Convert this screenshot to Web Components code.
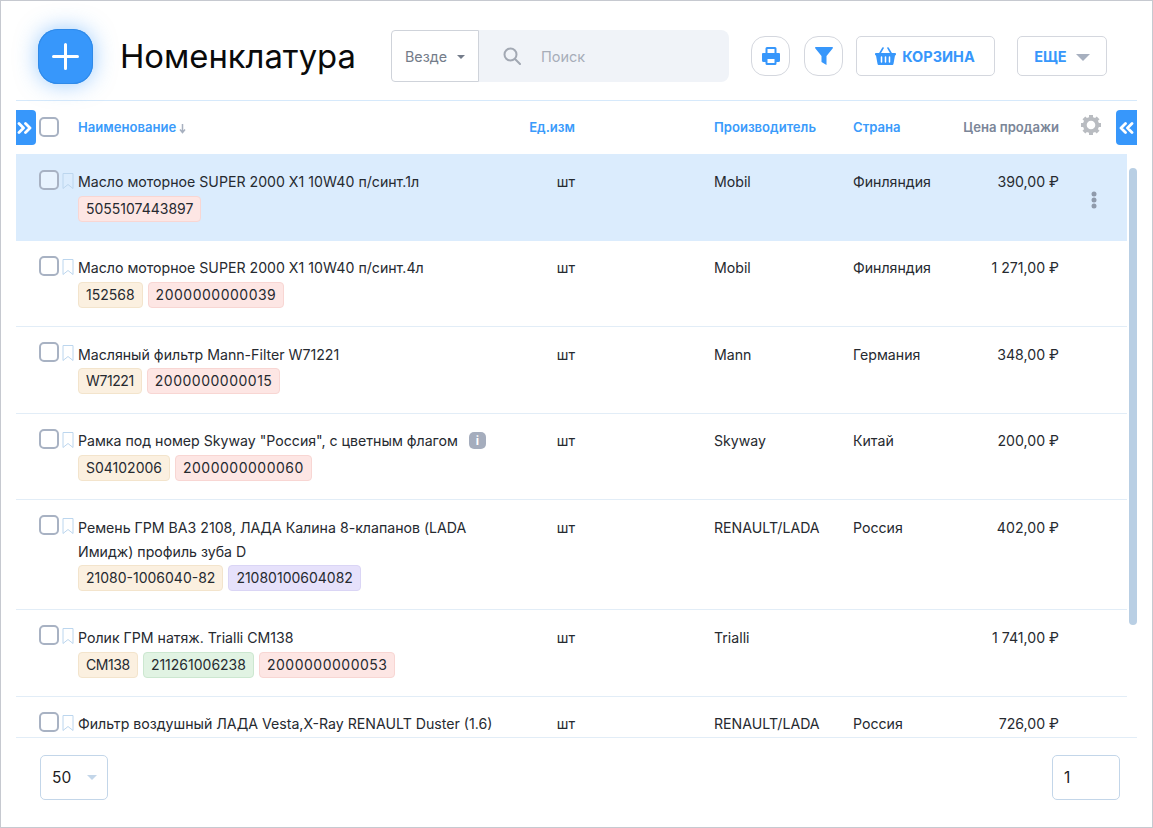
<!DOCTYPE html>
<html lang="ru">
<head>
<meta charset="utf-8">
<title>Номенклатура</title>
<style>
  html, body { margin: 0; height: 100%; }
  body { font-family: Inter, "Noto Sans", sans-serif; color: #262a30; background: #fff; overflow: hidden; }
</style>
</head>
<body>
<nom-app>
  <nom-header slot="header"></nom-header>
  <nom-table-head slot="head"></nom-table-head>

  <nom-row selected name="Масло моторное SUPER 2000 X1 10W40 п/синт.1л" maker="Mobil" country="Финляндия" price="390,00 ₽">
    <nom-tag kind="red">5055107443897</nom-tag>
  </nom-row>
  <nom-row name="Масло моторное SUPER 2000 X1 10W40 п/синт.4л" maker="Mobil" country="Финляндия" price="1 271,00 ₽">
    <nom-tag kind="orange">152568</nom-tag>
    <nom-tag kind="red" wide>2000000000039</nom-tag>
  </nom-row>
  <nom-row name="Масляный фильтр Mann-Filter W71221" maker="Mann" country="Германия" price="348,00 ₽">
    <nom-tag kind="orange" narrow>W71221</nom-tag>
    <nom-tag kind="red" wide>2000000000015</nom-tag>
  </nom-row>
  <nom-row info name="Рамка под номер Skyway &quot;Россия&quot;, с цветным флагом" maker="Skyway" country="Китай" price="200,00 ₽">
    <nom-tag kind="orange">S04102006</nom-tag>
    <nom-tag kind="red" wide>2000000000060</nom-tag>
  </nom-row>
  <nom-row name="Ремень ГРМ ВАЗ 2108, ЛАДА Калина 8-клапанов (LADA Имидж) профиль зуба D" maker="RENAULT/LADA" country="Россия" price="402,00 ₽">
    <nom-tag kind="orange">21080-1006040-82</nom-tag>
    <nom-tag kind="violet">21080100604082</nom-tag>
  </nom-row>
  <nom-row name="Ролик ГРМ натяж. Trialli CM138" maker="Trialli" country="" price="1 741,00 ₽">
    <nom-tag kind="orange" narrow>CM138</nom-tag>
    <nom-tag kind="green">211261006238</nom-tag>
    <nom-tag kind="red" wide>2000000000053</nom-tag>
  </nom-row>
  <nom-row name="Фильтр воздушный ЛАДА Vesta,X-Ray RENAULT Duster (1.6)" maker="RENAULT/LADA" country="Россия" price="726,00 ₽"></nom-row>

  <nom-footer slot="footer"></nom-footer>
</nom-app>

<script>
  const define = (name, html, Base = HTMLElement) => {
    const template = document.createElement('template')
    template.innerHTML = html
    customElements.define(name, class extends Base {
      constructor() {
        super()
        this.attachShadow({ mode: 'open' })
          .appendChild(template.content.cloneNode(true))
      }
    })
  }

  define('nom-app', `
    <style>
      :host { display: flex; flex-direction: column; box-sizing: border-box; height: 828px; padding: 0 15px; border: 1px solid #c6c9d0; position: relative; }
      .list { flex: 1; min-height: 0; overflow: hidden; margin-right: 10px; }
      .thumb { position: absolute; left: 1128px; top: 167px; width: 8px; height: 457px; border-radius: 4px; background: #b9cfe4; }
    </style>
    <slot name="header"></slot>
    <slot name="head"></slot>
    <div class="list"><slot></slot></div>
    <div class="thumb"></div>
    <slot name="footer"></slot>
  `)

  define('nom-header', `
    <style>
      :host { display: flex; align-items: center; height: 100px; box-sizing: border-box; border-bottom: 1px solid #d6e9fb; padding: 11px 0 0 22px; }
      .add { width: 55px; height: 55px; border-radius: 20px; background: #3797fb; box-shadow: 0 0 22px rgba(55, 151, 251, .5), inset 0 0 0 1px #2f8ae8; display: flex; align-items: center; justify-content: center; }
      h1 { margin: 0 36px 0 27px; font-size: 32.800px; font-weight: 400; color: #0a0a0a; white-space: nowrap; width: 235px; }
      .search { display: flex; height: 52px; width: 338px; margin-right: 22px; }
      .where { width: 88px; box-sizing: border-box; border: 1px solid #cfd3da; border-radius: 4px 0 0 4px; display: flex; align-items: center; gap: 10px; padding-left: 13px; font-size: 14.300px; color: #747c8a; }
      .where i { border: 4px solid transparent; border-top-color: #747c8a; border-bottom: 0; margin-top: 2px; }
      .field { flex: 1; background: #f0f3f8; border-radius: 0 8px 8px 0; display: flex; align-items: center; padding-left: 24px; gap: 20px; font-size: 14.500px; color: #a7adb9; }
      .round { width: 39px; height: 40px; box-sizing: border-box; border: 1px solid #d4d7de; border-radius: 14px; display: flex; align-items: center; justify-content: center; margin-right: 14px; }
      .btn { height: 40px; box-sizing: border-box; border: 1px solid #d4d7de; border-radius: 5px; display: flex; align-items: center; justify-content: center; font-size: 14.500px; font-weight: 700; color: #3797fb; }
      .cart { width: 139px; gap: 6px; margin-left: -1px; margin-right: 22px; padding-right: 1px; }
      .more { width: 90px; gap: 9px; }
      .more i { border: 7px solid transparent; border-top-color: #a7b0bf; border-bottom: 0; margin-top: 2px; }
    </style>
    <div class="add">
      <svg width="27" height="27" viewBox="0 0 27 27"><path d="M13.500 1.500v24M1.500 13.500h24" stroke="#fff" stroke-width="3" stroke-linecap="round"/></svg>
    </div>
    <h1>Номенклатура</h1>
    <div class="search">
      <div class="where">Везде<i></i></div>
      <div class="field">
        <svg width="18" height="18" viewBox="0 0 18 18" fill="none" stroke="#a2a8b3" stroke-width="2"><circle cx="7.500" cy="7.500" r="6"/><path d="M12 12l5 5" stroke-linecap="round"/></svg>
        Поиск
      </div>
    </div>
    <div class="round">
      <svg width="18" height="18" viewBox="0 0 18 18"><path fill="#3797fb" d="M3.500 1.500A1.500 1.500 0 0 1 5 0h8a1.500 1.500 0 0 1 1.500 1.500V6H17a1 1 0 0 1 1 1v6.500a1.500 1.500 0 0 1-1.500 1.500h-2v1.500A1.500 1.500 0 0 1 13 18H5a1.500 1.500 0 0 1-1.500-1.500V15h-2A1.500 1.500 0 0 1 0 13.500V7a1 1 0 0 1 1-1h2.500z"/><path fill="#fff" d="M5.500 2h7v4h-7zM5.500 12h7v4h-7z"/></svg>
    </div>
    <div class="round">
      <svg width="18" height="20" viewBox="0 0 18 20"><path fill="#3797fb" d="M.8 1h16.400c.7 0 1 .8.6 1.300L11.500 10v9l-5-3v-6L.2 2.300C-.2 1.800.1 1 .8 1z"/></svg>
    </div>
    <div class="btn cart">
      <svg width="21" height="18" viewBox="0 0 21 18"><path fill="none" stroke="#3797fb" stroke-width="1.600" stroke-linecap="round" d="M4.500 7L8 1M16.500 7L13 1"/><path fill="#3797fb" d="M.8 6h19.400c.4 0 .8.400.8.800v.8c0 .4-.4.800-.8.800H20l-1.500 8.300c-.1.700-.7 1.300-1.400 1.300H3.900c-.7 0-1.300-.6-1.400-1.300L1 8.400H.8c-.4 0-.8-.4-.8-.8v-.8C0 6.400.4 6 .8 6z"/><path stroke="#fff" stroke-width="1.500" stroke-linecap="round" d="M6.500 10v5M10.500 10v5M14.500 10v5"/></svg>
      КОРЗИНА
    </div>
    <div class="btn more">ЕЩЕ<i></i></div>
  `)

  const columns = '62px 422px 75px 278px 100px 106px 68px'

  define('nom-table-head', `
    <style>
      :host { display: grid; grid-template-columns: ${columns}; align-items: center; height: 53px; box-sizing: border-box; padding-bottom: 1px; font-size: 13.100px; font-weight: 600; color: #3a9bfb; position: relative; }
      .box { width: 20px; height: 20px; box-sizing: border-box; margin-left: 23px; border: 2px solid #a8b2c3; border-radius: 5px; }
      .unit { text-align: right; }
      .maker { padding-left: 139px; }
      .price { text-align: right; color: #7b8698; white-space: nowrap; }
      .sort { display: inline-block; vertical-align: -2px; margin-left: 3px; }
      .gear { padding-left: 22px; display: flex; margin-top: -4px; }
      .tab { position: absolute; top: 9px; width: 21px; height: 35px; background: #3797fb; display: flex; align-items: center; justify-content: center; }
      .tab.left { left: 0; width: 20px; border-radius: 0 4px 4px 0; padding-right: 3px; box-sizing: border-box; }
      .tab.right { right: 0; border-radius: 4px 0 0 4px; }
    </style>
    <div class="box"></div>
    <div>Наименование<svg class="sort" width="7" height="11" viewBox="0 0 7 11"><path d="M3.500 1v8M1 6.500l2.500 3 2.500-3" fill="none" stroke="#a7b0bf" stroke-width="1.500"/></svg></div>
    <div class="unit">Ед.изм</div>
    <div class="maker">Производитель</div>
    <div>Страна</div>
    <div class="price">Цена продажи</div>
    <div class="gear">
      <svg width="20" height="20" viewBox="-10 -10 20 20" fill="#b9bcc1">
        <circle r="6.200" fill="none" stroke="#b9bcc1" stroke-width="3.800"/>
        <g><rect x="-2" y="-10" width="4" height="4"/><rect x="-2" y="6" width="4" height="4"/></g>
        <g transform="rotate(45)"><rect x="-2" y="-10" width="4" height="4"/><rect x="-2" y="6" width="4" height="4"/></g>
        <g transform="rotate(90)"><rect x="-2" y="-10" width="4" height="4"/><rect x="-2" y="6" width="4" height="4"/></g>
        <g transform="rotate(135)"><rect x="-2" y="-10" width="4" height="4"/><rect x="-2" y="6" width="4" height="4"/></g>
      </svg>
    </div>
    <div class="tab left"><svg width="15" height="12" viewBox="0 0 15 12" fill="none" stroke="#fff" stroke-width="2.800" stroke-linecap="round" stroke-linejoin="round"><path d="M2 1.500L6.500 6 2 10.500M8.500 1.500L13 6 8.500 10.500"/></svg></div>
    <div class="tab right"><svg width="15" height="12" viewBox="0 0 15 12" fill="none" stroke="#fff" stroke-width="2.800" stroke-linecap="round" stroke-linejoin="round"><path d="M6.500 1.500L2 6 6.500 10.500M13 1.500L8.500 6 13 10.500"/></svg></div>
  `)

  const rowTemplate = document.createElement('template')
  rowTemplate.innerHTML = `
    <style>
      :host { display: grid; grid-template-columns: ${columns}; box-sizing: border-box; padding: 15.500px 0 18.200px; border-bottom: 1px solid #e2edf7; font-size: 14.150px; line-height: 24px; position: relative; }
      :host([selected]) { background: #dbecfd; border-bottom-color: #dbecfd; padding-top: 16px; }
      .lead { display: flex; margin-top: -.5px; padding-left: 23px; gap: 3px; align-items: flex-start; }
      .box { width: 20px; height: 20px; box-sizing: border-box; border: 2px solid #a8b2c3; border-radius: 5px; background: #fff; }
      :host([selected]) .box { background: #e8f3fe; }
      .mark { margin-top: 3px; }
      .tags { display: flex; gap: 5px; margin-top: 1.700px; }
      .unit { text-align: right; }
      .maker { padding-left: 139px; }
      .price { text-align: right; white-space: nowrap; }
      .info { display: none; width: 17px; height: 17px; border-radius: 5px; background: #a5adbd; color: #fff; font-size: 12px; font-weight: 700; line-height: 17px; text-align: center; margin-left: 11px; vertical-align: 1px; }
      :host([info]) .info { display: inline-block; }
      .dots { display: none; padding: 21px 0 0 32px; }
      :host([selected]) .dots { display: block; }
    </style>
    <div class="lead">
      <div class="box"></div>
      <svg class="mark" width="12" height="17" viewBox="0 0 12 17" fill="none" stroke="#bcd6ee"><path d="M1 .500h10v15l-5-4-5 4z"/></svg>
    </div>
    <div>
      <span class="name"></span><span class="info">i</span>
      <div class="tags"><slot></slot></div>
    </div>
    <div class="unit">шт</div>
    <div class="maker"></div>
    <div class="country"></div>
    <div class="price"></div>
    <div class="dots"><svg width="6" height="18" viewBox="0 0 6 18" fill="#8f9aab"><circle cx="3" cy="3" r="2.500"/><circle cx="3" cy="9" r="2.500"/><circle cx="3" cy="15" r="2.500"/></svg></div>
  `

  customElements.define('nom-row', class extends HTMLElement {
    constructor() {
      super()
      this.attachShadow({ mode: 'open' })
        .appendChild(rowTemplate.content.cloneNode(true))
    }

    connectedCallback() {
      for (const field of ['name', 'maker', 'country', 'price']) {
        this.shadowRoot.querySelector(`.${field}`).textContent = this.getAttribute(field)
      }
    }
  })

  define('nom-tag', `
    <style>
      :host { display: block; height: 26px; box-sizing: border-box; padding: 0 7px; border: 1px solid; border-radius: 4px; font-size: 14px; line-height: 24px; white-space: nowrap; }
      :host([wide]) { letter-spacing: .5px; }
      :host([narrow]) { letter-spacing: -.4px; }
      :host([kind="red"]) { background: #fde6e4; border-color: #f8d6d3; }
      :host([kind="orange"]) { background: #fbf0e0; border-color: #f3e4cc; }
      :host([kind="violet"]) { background: #e6e1fb; border-color: #dad5f5; }
      :host([kind="green"]) { background: #e1f3e3; border-color: #cce7d0; }
    </style>
    <slot></slot>
  `)

  define('nom-footer', `
    <style>
      :host { display: flex; justify-content: space-between; align-items: flex-start; height: 90px; box-sizing: border-box; border-top: 1px solid #e2edf7; padding: 17px 17px 0 24px; font-size: 15.500px; color: #1c1c1c; }
      .box { width: 68px; height: 45px; box-sizing: border-box; border: 1px solid #c3d6e9; border-radius: 5px; display: flex; align-items: center; justify-content: space-between; padding: 0 10px 0 11px; }
      i { border: 5px solid transparent; border-top-color: #c3d6e9; border-bottom: 0; }
    </style>
    <div class="box">50<i></i></div>
    <div class="box">1</div>
  `)
</script>
</body>
</html>
